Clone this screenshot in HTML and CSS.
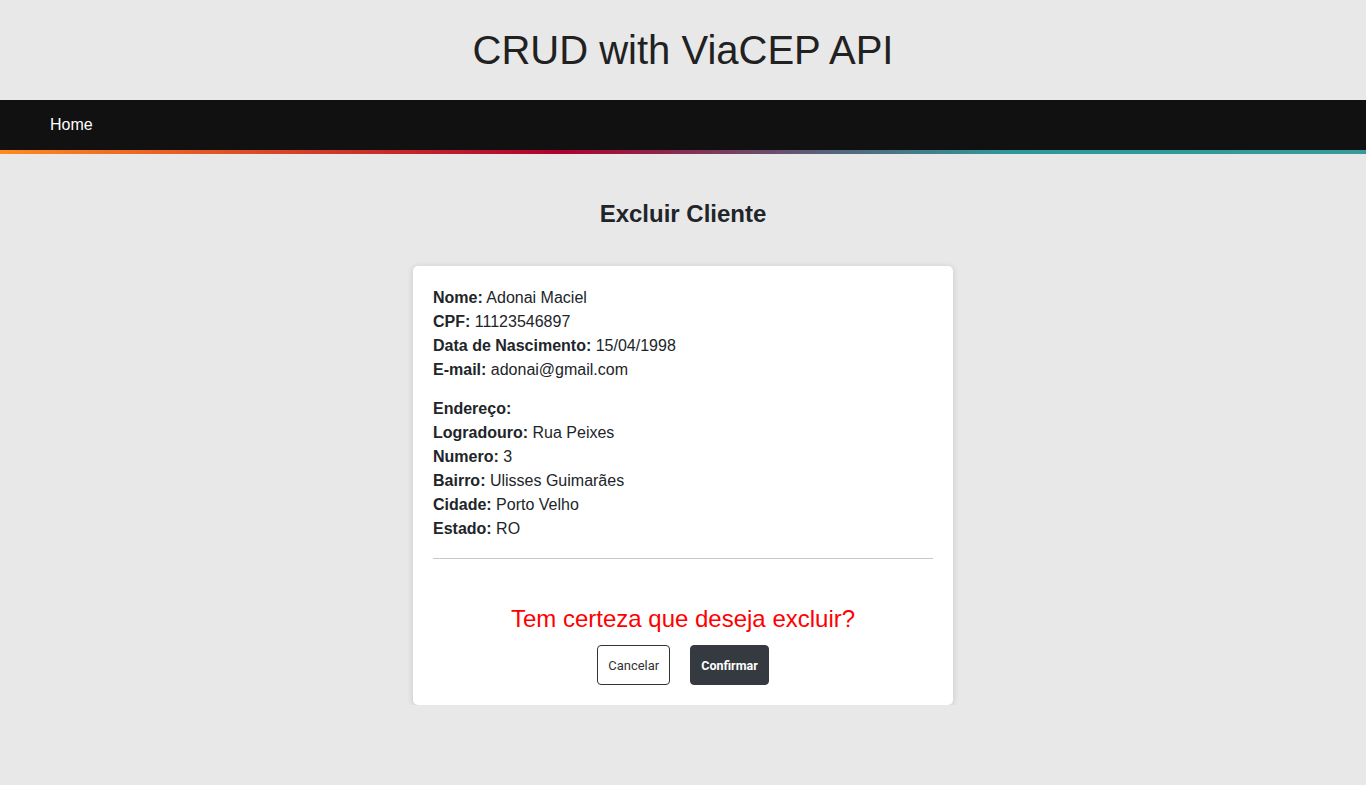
FILE: index.html
```html
<!DOCTYPE html>
<html lang="pt-BR">
<head>
<meta charset="utf-8">
<title>CRUD with ViaCEP API</title>
<link rel="stylesheet" href="styles.css">
</head>
<body>
<header class="site-header">
  <h1 class="site-title">CRUD with ViaCEP API</h1>
</header>
<nav class="navbar">
  <a class="nav-link" href="#">Home</a>
</nav>
<div class="nav-stripe"></div>
<main class="main">
  <h2 class="page-title">Excluir Cliente</h2>
  <section class="card">
    <div class="group">
      <div class="row"><b>Nome:</b> Adonai Maciel</div>
      <div class="row"><b>CPF:</b> 11123546897</div>
      <div class="row"><b>Data de Nascimento:</b> 15/04/1998</div>
      <div class="row"><b>E-mail:</b> adonai@gmail.com</div>
    </div>
    <div class="group">
      <div class="row"><b>Endereço:</b></div>
      <div class="row"><b>Logradouro:</b> Rua Peixes</div>
      <div class="row"><b>Numero:</b> 3</div>
      <div class="row"><b>Bairro:</b> Ulisses Guimarães</div>
      <div class="row"><b>Cidade:</b> Porto Velho</div>
      <div class="row"><b>Estado:</b> RO</div>
    </div>
    <hr class="divider">
    <p class="confirm-text">Tem certeza que deseja excluir?</p>
    <div class="actions">
      <button class="btn btn-outline">Cancelar</button>
      <button class="btn btn-dark">Confirmar</button>
    </div>
  </section>
</main>
</body>
</html>
```

FILE: styles.css
```css
* { box-sizing: border-box; }
html, body { margin: 0; padding: 0; }
body {
  background: #e8e8e8;
  font-family: "Liberation Sans", Arial, sans-serif;
  color: #212529;
}
.site-header {
  height: 100px;
  display: flex;
  align-items: center;
  justify-content: center;
}
.site-title {
  margin: 0;
  font-size: 40px;
  font-weight: 400;
  color: #212121;
}
.navbar {
  height: 50px;
  background: #111111;
  display: flex;
  align-items: center;
  padding-left: 50px;
}
.nav-link {
  color: #ffffff;
  text-decoration: none;
  font-size: 16px;
}
.nav-stripe {
  height: 4px;
  background: linear-gradient(to right, #ff8a1f 0%, #b0002f 41%, #5a6079 60%, #2f9999 74%, #369a9a 100%);
}
.main {
  display: flex;
  flex-direction: column;
  align-items: center;
}
.page-title {
  margin: 46px 0 0;
  font-size: 24px;
  line-height: 28px;
  font-weight: 700;
  color: #212529;
}
.card {
  margin-top: 38px;
  width: 540px;
  background: #ffffff;
  border-radius: 5px;
  box-shadow: 0 1px 6px rgba(0, 0, 0, 0.15);
  padding: 20px 20px 20px;
  font-size: 16px;
  line-height: 24px;
}
.group + .group { margin-top: 15px; }
.divider {
  margin: 17px 0 0;
  border: 0;
  border-top: 1px solid #c8c8c8;
}
.confirm-text {
  margin: 44px 0 0;
  text-align: center;
  color: #ff0000;
  font-size: 24px;
  line-height: 32px;
}
.actions {
  display: flex;
  justify-content: center;
  gap: 20px;
  margin-top: 10px;
}
.btn {
  height: 40px;
  font-family: Roboto, "Liberation Sans", Arial, sans-serif;
  font-size: 13px;
  border-radius: 4px;
  padding: 0 10px;
  cursor: pointer;
}
.btn-outline {
  background: #ffffff;
  color: #333333;
  border: 1px solid #333333;
}
.btn-dark {
  background: #343a40;
  color: #ffffff;
  border: 1px solid #343a40;
  font-weight: 700;
  font-size: 12.5px;
}
```
